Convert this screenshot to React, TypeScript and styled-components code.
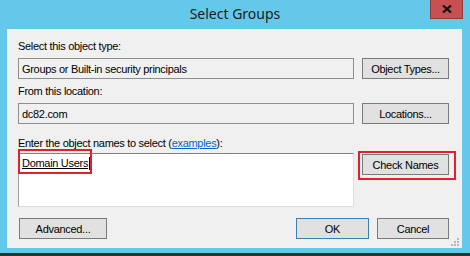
import styled, { createGlobalStyle } from 'styled-components';

const GlobalStyle = createGlobalStyle`
  html, body {
    margin: 0;
    padding: 0;
    background: #65c8ea;
  }
  body {
    font-family: 'Liberation Sans', Arial, sans-serif;
    font-size: 11px;
    letter-spacing: -0.3px;
    color: #000;
  }
`;

const Window = styled.div`
  width: 470px;
  height: 256px;
  box-sizing: border-box;
  background: #65c8ea;
  border-bottom: 3px solid #2f3133;
  display: flex;
  flex-direction: column;
`;

const TitleBar = styled.div`
  height: 29px;
  display: grid;
  grid-template-columns: 1fr auto 1fr;
  align-items: start;
`;

const Title = styled.div`
  grid-column: 2;
  font-family: 'Noto Sans', 'Open Sans', sans-serif;
  font-size: 14px;
  letter-spacing: 0;
  line-height: 28px;
  color: #1b1b1b;
`;

const CloseButton = styled.div`
  grid-column: 3;
  justify-self: end;
  margin-right: 7px;
  width: 33px;
  height: 19px;
  box-sizing: border-box;
  background: #c75050;
  border: 1px solid #8f3a3a;
  border-top: none;
  display: flex;
  align-items: center;
  justify-content: center;
`;

const Client = styled.div`
  margin: 0 8px 0 7px;
  height: 219px;
  box-sizing: border-box;
  background: #f0f0f0;
  padding: 11px 13px 0 11px;
  display: flex;
  flex-direction: column;
`;

const Label = styled.div<{ $top?: number }>`
  line-height: 13px;
  margin-top: ${(p) => p.$top ?? 0}px;
  white-space: nowrap;
`;

const Link = styled.span`
  color: #0066cc;
  text-decoration: underline;
`;

const Row = styled.div<{ $top: number }>`
  display: flex;
  gap: 8px;
  align-items: flex-start;
  margin-top: ${(p) => p.$top}px;
`;

const ReadOnlyBox = styled.div`
  width: 336px;
  height: 21px;
  box-sizing: border-box;
  border: 1px solid #8e8e8e;
  background: #f0f0f0;
  padding-left: 3px;
  display: flex;
  align-items: center;
  white-space: nowrap;
`;

const NamesBox = styled.div`
  position: relative;
  width: 336px;
  height: 54px;
  box-sizing: border-box;
  background: #fff;
  border-top: 1px solid #828282;
  border-left: 1px solid #a0a0a0;
  border-right: 1px solid #dedede;
  border-bottom: 1px solid #dedede;
  padding: 3px 0 0 3px;
`;

const ResolvedName = styled.span`
  text-decoration: underline;
  line-height: 13px;
`;

const Caret = styled.span`
  display: inline-block;
  width: 1px;
  height: 13px;
  background: #000;
  margin-left: 1px;
  vertical-align: top;
`;

const Button = styled.div<{ $default?: boolean; $width?: number }>`
  position: relative;
  width: ${(p) => p.$width ?? 87}px;
  height: 21px;
  box-sizing: border-box;
  background: #e1e1e1;
  border: 1px solid ${(p) => (p.$default ? '#3c7fb1' : '#7a7a7a')};
  display: flex;
  align-items: center;
  justify-content: center;
  white-space: nowrap;
  flex-shrink: 0;
`;

const Highlight = styled.div<{ $l: number; $t: number; $r: number; $b: number }>`
  position: absolute;
  left: ${(p) => p.$l}px;
  top: ${(p) => p.$t}px;
  right: ${(p) => p.$r}px;
  bottom: ${(p) => p.$b}px;
  border: 2px solid #e3202a;
  pointer-events: none;
`;

const Footer = styled.div`
  display: flex;
  align-items: flex-start;
  margin-top: 11px;
  padding-left: 1px;
`;

const FooterRight = styled.div`
  margin-left: auto;
  display: flex;
  gap: 8px;
  position: relative;
`;

const Grip = styled.svg`
  position: absolute;
  right: -10px;
  bottom: -7px;
`;

export default function App() {
  return (
    <>
      <GlobalStyle />
      <Window>
        <TitleBar>
          <Title>Select Groups</Title>
          <CloseButton>
            <svg width="10" height="8" viewBox="0 0 10 8">
              <path d="M1 0.5 L9 7.5 M9 0.5 L1 7.5" stroke="#111" strokeWidth="2.2" />
            </svg>
          </CloseButton>
        </TitleBar>
        <Client>
          <Label>Select this object type:</Label>
          <Row $top={5}>
            <ReadOnlyBox>Groups or Built-in security principals</ReadOnlyBox>
            <Button>Object Types...</Button>
          </Row>
          <Label $top={6}>From this location:</Label>
          <Row $top={5}>
            <ReadOnlyBox>dc82.com</ReadOnlyBox>
            <Button>Locations...</Button>
          </Row>
          <Label $top={13}>
            Enter the object names to select (<Link>examples</Link>):
          </Label>
          <Row $top={3}>
            <NamesBox>
              <ResolvedName>Domain Users</ResolvedName>
              <Caret />
              <Highlight $l={-1} $t={-5} $r={261} $b={32} />
            </NamesBox>
            <Button style={{ marginTop: 1 }}>
              Check Names
              <Highlight $l={-5} $t={-4} $r={-8} $b={-6} />
            </Button>
          </Row>
          <Footer>
            <Button $width={88}>Advanced...</Button>
            <FooterRight>
              <Button $default $width={73}>OK</Button>
              <Button $width={72}>Cancel</Button>
              <Grip width="8" height="8" viewBox="0 0 8 8">
                {[
                  [6, 0],
                  [6, 3],
                  [3, 3],
                  [6, 6],
                  [3, 6],
                  [0, 6],
                ].map(([x, y]) => (
                  <rect key={`${x}-${y}`} x={x} y={y} width="2" height="2" fill="#b5b5b5" />
                ))}
              </Grip>
            </FooterRight>
          </Footer>
        </Client>
      </Window>
    </>
  );
}
